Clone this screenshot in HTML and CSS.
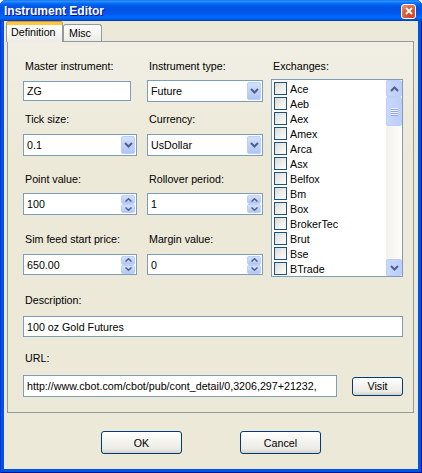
FILE: index.html
```html
<!DOCTYPE html>
<html>
  <head>
    <meta charset="utf-8">
    <link rel="stylesheet" href="styles.css">
  </head>
  <body>
    <div class="window">
      <div class="titlebar">
        <span class="title">Instrument Editor</span>
        <button class="close-btn">
          <svg width="8" height="8" viewBox="0 0 8 8"><path d="M1 1L7 7M7 1L1 7" stroke="#fff" stroke-width="1.8"/></svg>
        </button>
      </div>

      <div class="client">
        <ul class="tabs">
          <li class="tab active">Definition</li>
          <li class="tab">Misc</li>
        </ul>

        <div class="panel">
          <div class="grid">
            <label class="lbl">Master instrument:</label>
            <label class="lbl">Instrument type:</label>
            <label class="lbl">Exchanges:</label>

            <input class="text narrow" type="text" value="ZG">
            <div class="combo">
              <span class="combo-val">Future</span>
              <span class="combo-btn"><svg width="9" height="6" viewBox="0 0 9 6"><path d="M1 1L4.5 4.5L8 1" fill="none" stroke="#4d6185" stroke-width="2"/></svg></span>
            </div>

            <div class="listbox">
              <ul class="checklist" id="exchangeList"></ul>
              <div class="scrollbar">
                <span class="sb-btn"><svg width="9" height="6" viewBox="0 0 9 6"><path d="M1 5L4.5 1.5L8 5" fill="none" stroke="#4d6185" stroke-width="2"/></svg></span>
                <span class="sb-thumb">
                  <svg width="7" height="8" viewBox="0 0 7 8"><path d="M0 0.5H7M0 2.5H7M0 4.5H7M0 6.5H7" stroke="#eef3ff" stroke-width="1"/><path d="M0 1.5H7M0 3.5H7M0 5.5H7M0 7.5H7" stroke="#8caae6" stroke-width="1"/></svg>
                </span>
                <span class="sb-track"></span>
                <span class="sb-btn"><svg width="9" height="6" viewBox="0 0 9 6"><path d="M1 1L4.5 4.5L8 1" fill="none" stroke="#4d6185" stroke-width="2"/></svg></span>
              </div>
            </div>

            <label class="lbl">Tick size:</label>
            <label class="lbl">Currency:</label>

            <div class="combo col1">
              <span class="combo-val">0.1</span>
              <span class="combo-btn"><svg width="9" height="6" viewBox="0 0 9 6"><path d="M1 1L4.5 4.5L8 1" fill="none" stroke="#4d6185" stroke-width="2"/></svg></span>
            </div>
            <div class="combo">
              <span class="combo-val">UsDollar</span>
              <span class="combo-btn"><svg width="9" height="6" viewBox="0 0 9 6"><path d="M1 1L4.5 4.5L8 1" fill="none" stroke="#4d6185" stroke-width="2"/></svg></span>
            </div>

            <label class="lbl">Point value:</label>
            <label class="lbl">Rollover period:</label>

            <div class="spin col1">
              <input type="text" value="100">
              <span class="spin-btns">
                <span class="spin-btn"><svg width="7" height="4" viewBox="0 0 7 4"><path d="M0.5 3.5L3.5 0.8L6.5 3.5" fill="none" stroke="#4d6185" stroke-width="1.5"/></svg></span>
                <span class="spin-btn"><svg width="7" height="4" viewBox="0 0 7 4"><path d="M0.5 0.5L3.5 3.2L6.5 0.5" fill="none" stroke="#4d6185" stroke-width="1.5"/></svg></span>
              </span>
            </div>
            <div class="spin">
              <input type="text" value="1">
              <span class="spin-btns">
                <span class="spin-btn"><svg width="7" height="4" viewBox="0 0 7 4"><path d="M0.5 3.5L3.5 0.8L6.5 3.5" fill="none" stroke="#4d6185" stroke-width="1.5"/></svg></span>
                <span class="spin-btn"><svg width="7" height="4" viewBox="0 0 7 4"><path d="M0.5 0.5L3.5 3.2L6.5 0.5" fill="none" stroke="#4d6185" stroke-width="1.5"/></svg></span>
              </span>
            </div>

            <label class="lbl">Sim feed start price:</label>
            <label class="lbl">Margin value:</label>

            <div class="spin col1 short">
              <input type="text" value="650.00">
              <span class="spin-btns">
                <span class="spin-btn"><svg width="7" height="4" viewBox="0 0 7 4"><path d="M0.5 3.5L3.5 0.8L6.5 3.5" fill="none" stroke="#4d6185" stroke-width="1.5"/></svg></span>
                <span class="spin-btn"><svg width="7" height="4" viewBox="0 0 7 4"><path d="M0.5 0.5L3.5 3.2L6.5 0.5" fill="none" stroke="#4d6185" stroke-width="1.5"/></svg></span>
              </span>
            </div>
            <div class="spin short">
              <input type="text" value="0">
              <span class="spin-btns">
                <span class="spin-btn"><svg width="7" height="4" viewBox="0 0 7 4"><path d="M0.5 3.5L3.5 0.8L6.5 3.5" fill="none" stroke="#4d6185" stroke-width="1.5"/></svg></span>
                <span class="spin-btn"><svg width="7" height="4" viewBox="0 0 7 4"><path d="M0.5 0.5L3.5 3.2L6.5 0.5" fill="none" stroke="#4d6185" stroke-width="1.5"/></svg></span>
              </span>
            </div>
          </div>

          <div class="wide">
            <label class="lbl">Description:</label>
            <input class="text desc" type="text" value="100 oz Gold Futures">

            <label class="lbl url-lbl">URL:</label>
            <div class="url-row">
              <input class="text url" type="text" value="http://www.cbot.com/cbot/pub/cont_detail/0,3206,297+21232,">
              <button class="xp-btn visit">Visit</button>
            </div>
          </div>
        </div>

        <div class="buttons">
          <button class="xp-btn big">OK</button>
          <button class="xp-btn big">Cancel</button>
        </div>
      </div>
    </div>

    <script>
      var exchanges = ["Ace", "Aeb", "Aex", "Amex", "Arca", "Asx", "Belfox", "Bm", "Box", "BrokerTec", "Brut", "Bse", "BTrade"];

      var list = document.getElementById("exchangeList");
      exchanges.forEach(function (name) {
        var li = document.createElement("li");
        var box = document.createElement("span");
        box.className = "chk";
        li.appendChild(box);
        li.appendChild(document.createTextNode(name));
        list.appendChild(li);
      });
    </script>
  </body>
</html>
```

FILE: styles.css
```css
* {
  box-sizing: border-box;
}

body {
  margin: 0;
  padding: 0;
  font-family: "Liberation Sans", Arial, sans-serif;
  font-size: 10.7px;
  color: #000;
  background-color: #fff;
}

.window {
  width: 422px;
  height: 473px;
  display: flex;
  flex-direction: column;
  background-color: #0054e3;
  border-radius: 6px 6px 0 0;
  box-shadow: inset 1px 0 #0831d9, inset -1px 0 #00138c, inset 0 -1px #00138c;
}

/* title bar */
.titlebar {
  height: 21px;
  display: flex;
  align-items: center;
  justify-content: space-between;
  padding: 0 6px 0 4px;
  border-radius: 6px 6px 0 0;
  background: linear-gradient(180deg, #0058ee 0%, #3593ff 4%, #288eff 8%, #127dff 12%, #036ffc 16%, #0262ee 22%, #0057e5 30%, #0054e3 40%, #0055eb 60%, #005bf5 70%, #026afe 80%, #0062ef 88%, #0052d6 94%, #0040ab 100%);
}

.title {
  color: #fff;
  font-weight: bold;
  font-size: 12px;
  text-shadow: 1px 1px #0f1089;
  padding-top: 1px;
}

.close-btn {
  width: 15px;
  height: 15px;
  padding: 0;
  margin-top: 1px;
  display: flex;
  align-items: center;
  justify-content: center;
  border: 1px solid #fff;
  border-radius: 3px;
  background: radial-gradient(circle at 70% 75%, #cc4625 0%, #e0603c 55%, #f39e85 100%);
}

/* client area */
.client {
  flex: 1;
  margin: 0 4px 4px 4px;
  background-color: #ece9d8;
  display: flex;
  flex-direction: column;
}

.tabs {
  list-style: none;
  margin: 0;
  padding: 0 0 0 2px;
  height: 20px;
  display: flex;
  align-items: flex-end;
}

.tab {
  height: 17px;
  width: 39px;
  padding: 2px 0 0 5px;
  border: 1px solid #919b9c;
  border-bottom: none;
  border-radius: 3px 3px 0 0;
  background: linear-gradient(180deg, #ffffff 0%, #f7f6f2 50%, #ecebe6 100%);
}

.tab.active {
  position: relative;
  z-index: 1;
  width: 57px;
  height: 20px;
  margin-bottom: -1px;
  padding: 1px 0 0 4px;
  border-top: 3px solid #ffc73c;
  box-shadow: 0 -1px 0 #e68b2c;
  background-color: #f1efe5;
}

.panel {
  height: 372px;
  margin: 0 4px 0 3px;
  border: 1px solid #919b9c;
  background: linear-gradient(180deg, #f1efe5 0%, #ece9d8 30%, #ece9d8 100%);
  padding: 18px 0 0 15px;
}

.grid {
  display: grid;
  grid-template-columns: 124px 124px 132px;
  grid-template-rows: 20px 33px 21px 39px 20px 40px 21px 21px;
  align-items: start;
}

.lbl {
  display: block;
  line-height: 13px;
  padding-left: 2px;
}

/* text inputs */
.text,
.spin input {
  font-family: inherit;
  font-size: 10.7px;
  color: #000;
  border: 1px solid #7f9db9;
  background-color: #fff;
  padding: 0 0 0 3px;
  margin: 0;
  outline: none;
}

.text.narrow {
  width: 108px;
  height: 20px;
  margin-top: 1px;
}

/* combo boxes */
.combo,
.spin {
  width: 116px;
  height: 22px;
  border: 1px solid #7f9db9;
  background-color: #fff;
  display: flex;
  align-items: center;
}

.combo.col1,
.spin.col1 {
  width: 114px;
}

.spin.short {
  height: 21px;
}

.combo-val {
  flex: 1;
  padding-left: 3px;
}

.combo-btn {
  width: 14px;
  height: 18px;
  margin-right: 1px;
  display: flex;
  align-items: center;
  justify-content: center;
  border: 1px solid #bacffa;
  border-radius: 2px;
  background: linear-gradient(180deg, #d3e0fd 0%, #c1d3fb 50%, #b0c5f5 100%);
}

/* spinners */
.spin input {
  flex: 1;
  min-width: 0;
  height: 100%;
  border: none;
}

.spin-btns {
  width: 14px;
  height: 18px;
  margin-right: 1px;
  display: flex;
  flex-direction: column;
}

.spin-btn {
  flex: 1;
  display: flex;
  align-items: center;
  justify-content: center;
  border: 1px solid #bacffa;
  border-radius: 2px;
  background: linear-gradient(180deg, #d3e0fd 0%, #c1d3fb 60%, #b0c5f5 100%);
}

/* exchanges list */
.listbox {
  grid-row: span 7;
  margin-top: -1px;
  width: 132px;
  height: 198px;
  border: 1px solid #7f9db9;
  background-color: #fff;
  display: flex;
  overflow: hidden;
}

.checklist {
  flex: 1;
  list-style: none;
  margin: 0;
  padding: 1px 0 0 2px;
}

.checklist li {
  height: 15px;
  display: flex;
  align-items: center;
  gap: 3px;
}

.chk {
  width: 13px;
  height: 13px;
  border: 1px solid #1c5180;
  background: linear-gradient(135deg, #dcdcd7 0%, #f0f0ec 60%, #ffffff 100%);
}

.scrollbar {
  width: 16px;
  display: flex;
  flex-direction: column;
  background: linear-gradient(90deg, #f3f1ec 0%, #fefefb 100%);
}

.sb-btn {
  height: 17px;
  display: flex;
  align-items: center;
  justify-content: center;
  border: 1px solid #bacffa;
  border-radius: 2px;
  background: linear-gradient(90deg, #c8d7fc 0%, #bccefa 100%);
}

.sb-thumb {
  height: 29px;
  display: flex;
  align-items: center;
  justify-content: center;
  border: 1px solid #bacffa;
  border-radius: 2px;
  background: linear-gradient(90deg, #c8d7fc 0%, #bccefa 100%);
}

.sb-track {
  flex: 1;
}

/* description and url */
.wide {
  margin-top: 19px;
}

.text.desc {
  display: block;
  width: 380px;
  height: 21px;
  margin-top: 9px;
}

.url-lbl {
  margin-top: 15px;
}

.url-row {
  margin-top: 10px;
  display: flex;
  align-items: center;
  gap: 15px;
}

.text.url {
  width: 314px;
  height: 22px;
}

/* buttons */
.xp-btn {
  font-family: inherit;
  font-size: 10.7px;
  color: #000;
  padding: 0;
  border: 1px solid #003c74;
  border-radius: 3px;
  background: linear-gradient(180deg, #ffffff 0%, #f4f4f0 40%, #ecebe6 80%, #d6d0c5 100%);
}

.visit {
  width: 51px;
  height: 19px;
}

.buttons {
  margin-top: 18px;
  display: flex;
  justify-content: center;
  gap: 58px;
}

.big {
  width: 81px;
  height: 23px;
}
```
